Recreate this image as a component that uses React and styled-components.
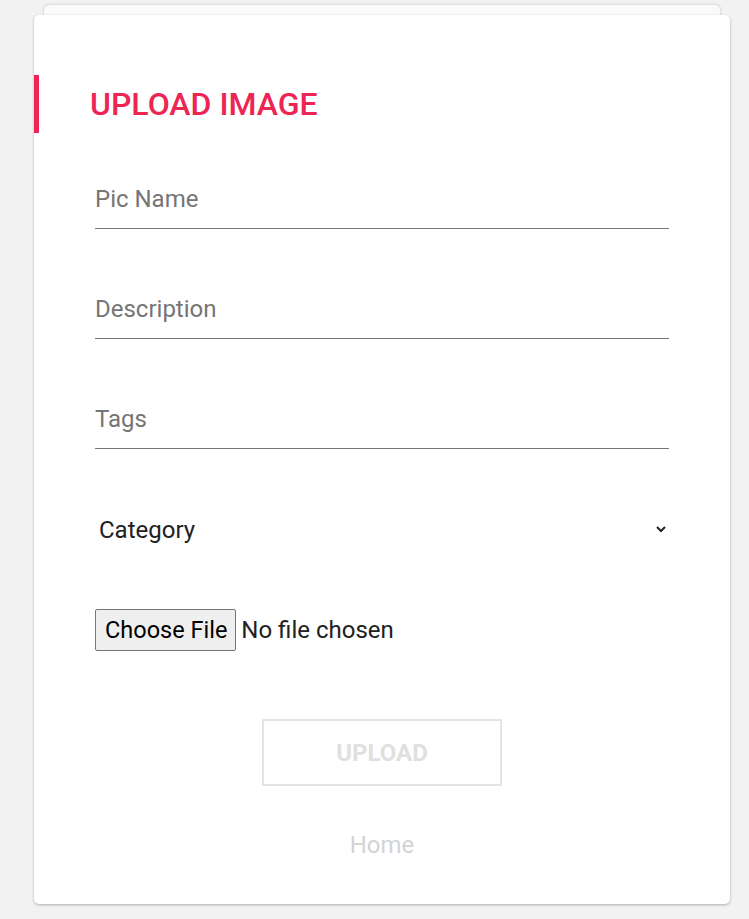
import React from 'react';
import styled, { createGlobalStyle } from 'styled-components';

const GlobalStyle = createGlobalStyle`
  html, body {
    margin: 0;
    padding: 0;
    background: #f2f2f2;
    font-family: Roboto, 'Liberation Sans', sans-serif;
  }
`;

const Page = styled.div`
  padding: 5px 19px 16px 34px;
`;

const BackCard = styled.div`
  height: 10px;
  margin: 0 10px;
  background: #fafafa;
  border-radius: 5px 5px 0 0;
  box-shadow: 0 0 3px rgba(0, 0, 0, 0.22);
`;

const Card = styled.div`
  position: relative;
  background: #fff;
  border-radius: 5px;
  padding: 60px 0 45px;
  box-shadow: 0 1px 3px rgba(0, 0, 0, 0.28);
`;

const Title = styled.h1`
  margin: 0 0 36px;
  padding: 10px 0 10px 51px;
  border-left: 5px solid #ed2553;
  color: #ed2553;
  font-size: 32px;
  line-height: 38px;
  font-weight: 500;
  text-transform: uppercase;
`;

const Field = styled.div`
  margin: 0 61px 50px;
`;

const TextInput = styled.input`
  display: block;
  box-sizing: border-box;
  width: 100%;
  height: 60px;
  padding: 0;
  border: none;
  border-bottom: 1px solid #757575;
  outline: none;
  background: transparent;
  font-family: inherit;
  font-size: 24px;
  color: #212121;

  &::placeholder {
    color: #757575;
  }
`;

const Select = styled.select`
  display: block;
  width: 100%;
  height: 61px;
  border: none;
  outline: none;
  background: transparent;
  font-family: inherit;
  font-size: 24px;
  color: #212121;
`;

const FileRow = styled.div`
  height: 60px;
  margin-top: -1px;

  input {
    font-family: inherit;
    font-size: 24px;
    color: #212121;
  }

  input::file-selector-button {
    box-sizing: border-box;
    height: 42px;
    margin-right: 5px;
    padding: 0 8px 0 9px;
    border: 1px solid #767676;
    border-radius: 2px;
    background: #efefef;
    font-family: inherit;
    font-size: 23.5px;
    color: #000;
  }
`;

const ButtonRow = styled.div`
  display: flex;
  justify-content: center;
  margin: 0 60px;
`;

const UploadButton = styled.button`
  width: 240px;
  height: 67px;
  background: transparent;
  border: 2px solid #e4e4e4;
  font-family: inherit;
  font-size: 24px;
  font-weight: 700;
  color: #e0e0e0;
  text-transform: uppercase;
  cursor: pointer;
`;

const Footer = styled.div`
  margin: 45px 0 0;
  text-align: center;

  a {
    color: #d3d3d3;
    font-size: 24px;
    text-decoration: none;
  }
`;

const fields = ['Pic Name', 'Description', 'Tags'];

export default function App() {
  return (
    <Page>
      <GlobalStyle />
      <BackCard />
      <Card>
        <Title>Upload Image</Title>
        <form>
          {fields.map((name) => (
            <Field key={name}>
              <TextInput type="text" placeholder={name} />
            </Field>
          ))}
          <Field>
            <Select defaultValue="">
              <option value="">Category</option>
              <option value="nature">Nature</option>
              <option value="people">People</option>
            </Select>
          </Field>
          <Field>
            <FileRow>
              <input type="file" />
            </FileRow>
          </Field>
          <ButtonRow>
            <UploadButton type="button">Upload</UploadButton>
          </ButtonRow>
        </form>
        <Footer>
          <a href="#home">Home</a>
        </Footer>
      </Card>
    </Page>
  );
}
